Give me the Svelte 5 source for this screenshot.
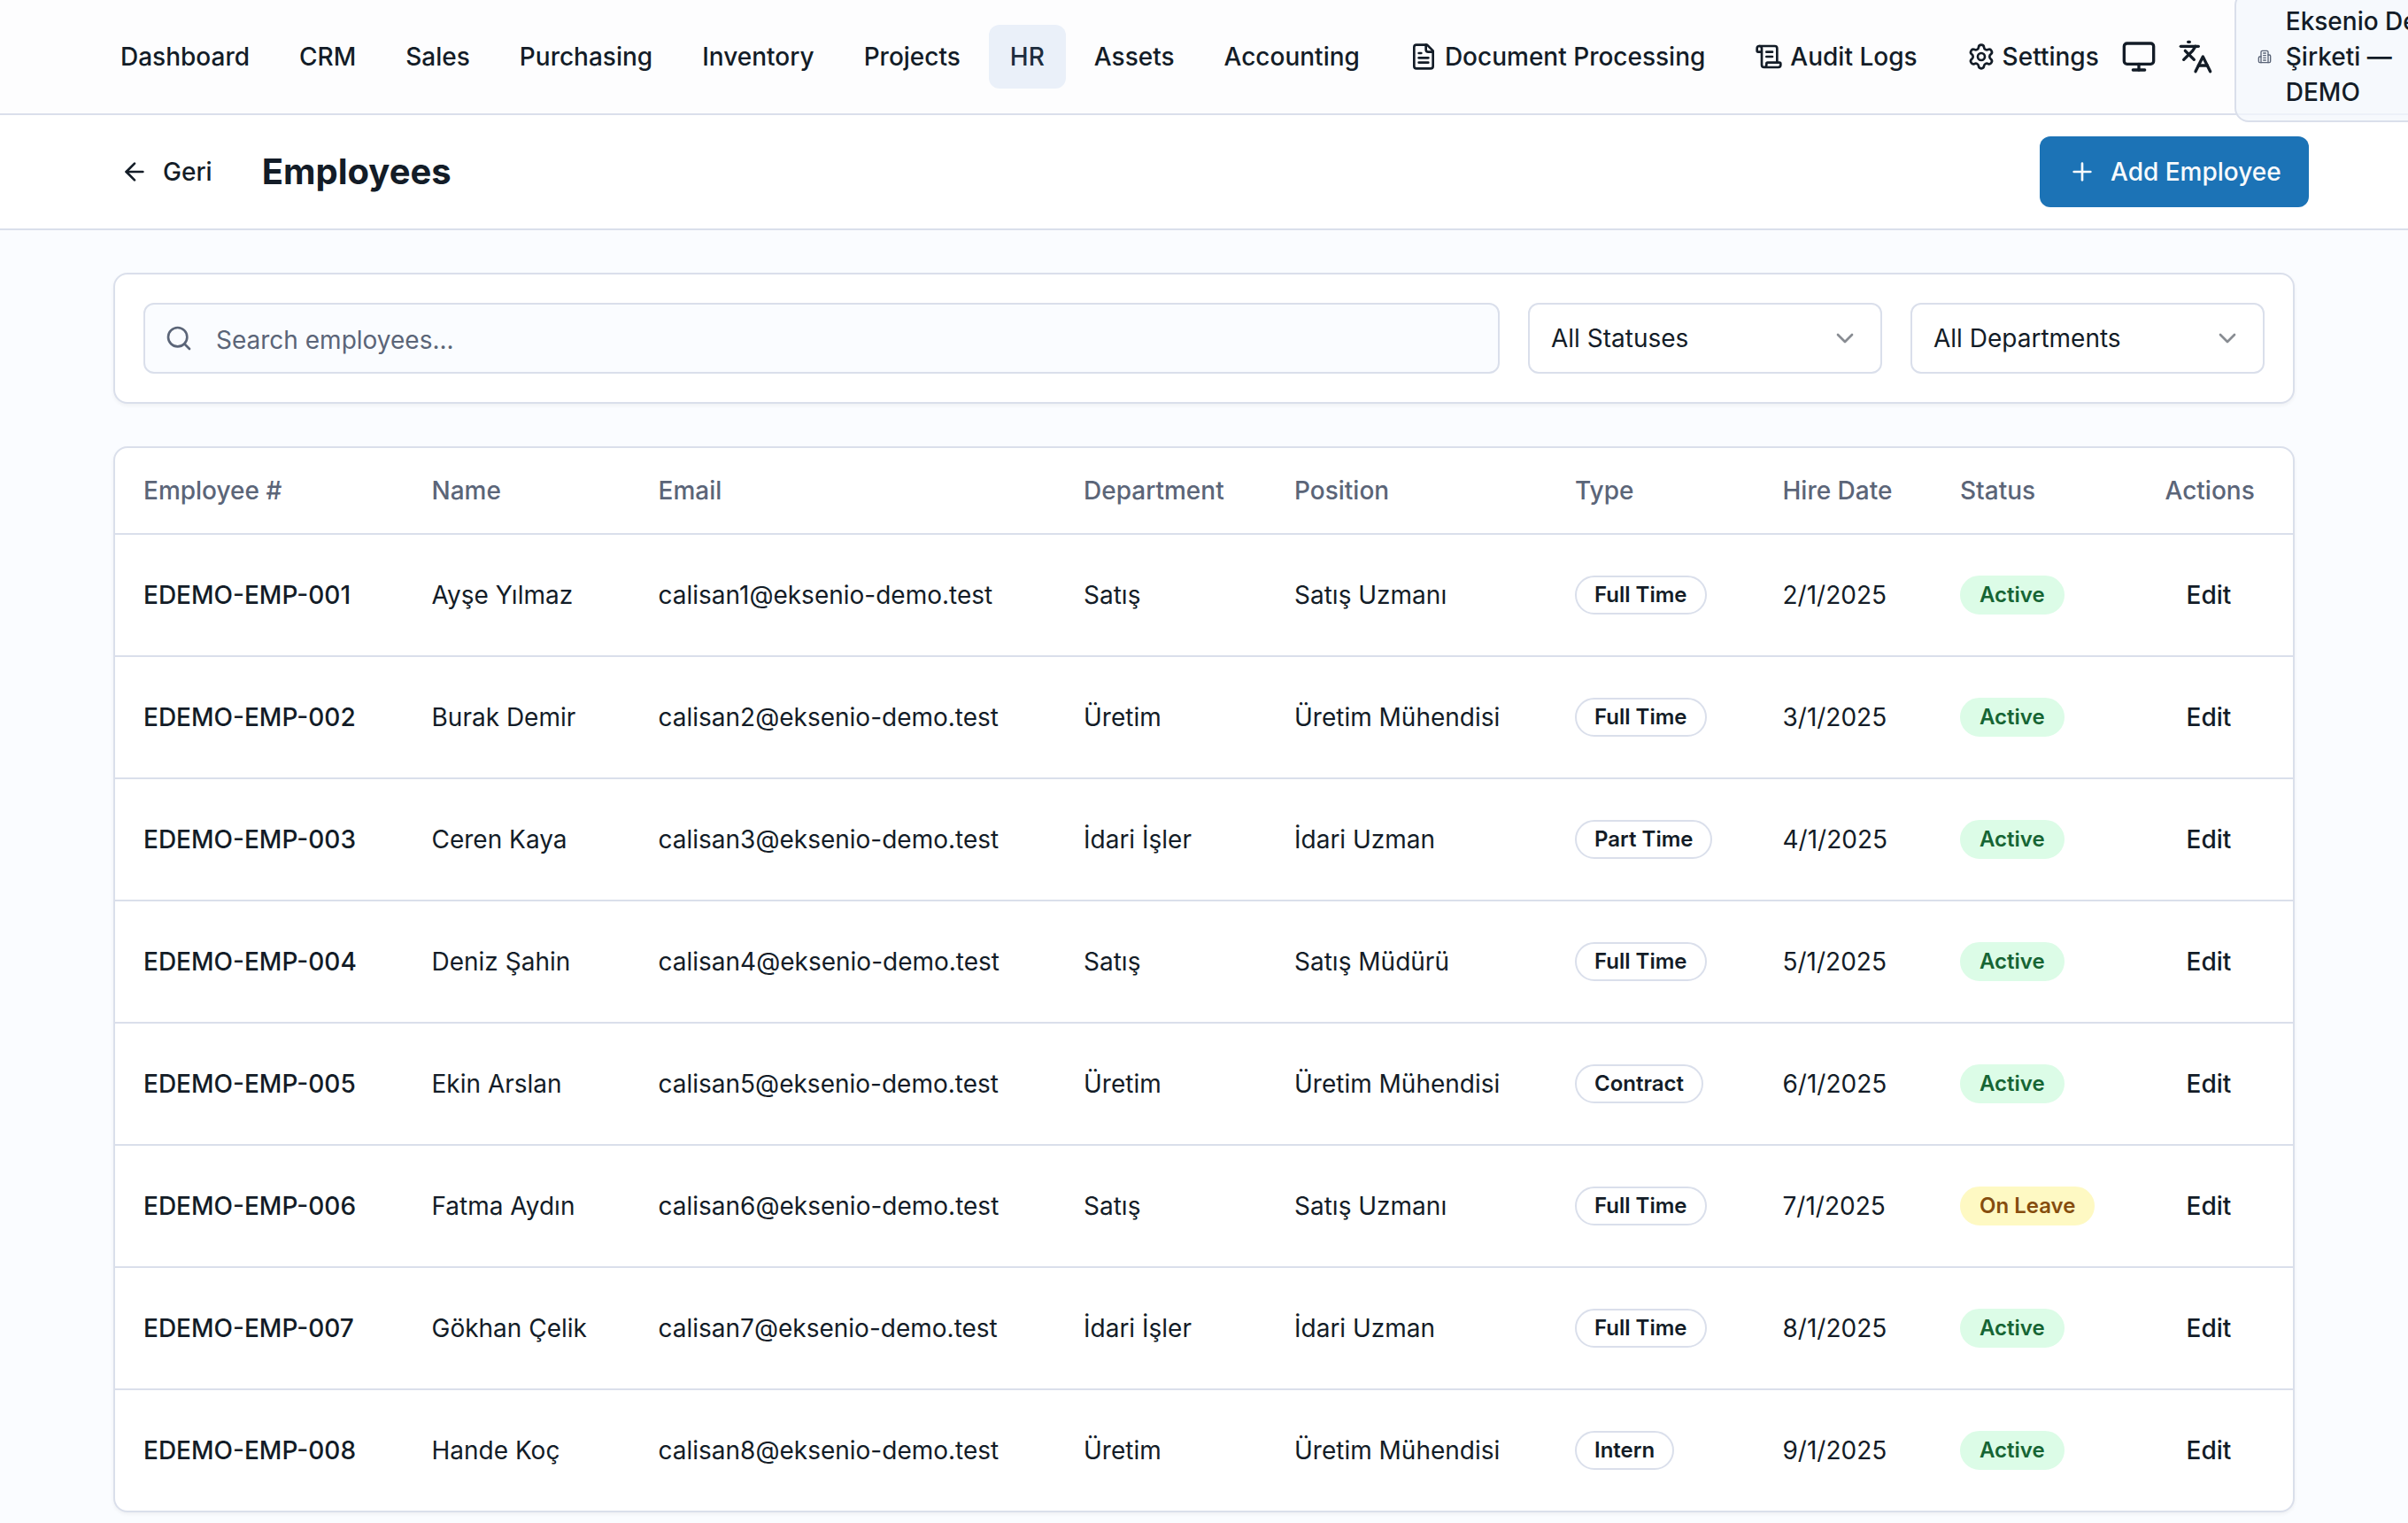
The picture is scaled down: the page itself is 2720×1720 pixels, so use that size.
<script>
  const links = ['Dashboard', 'CRM', 'Sales', 'Purchasing', 'Inventory', 'Projects', 'HR', 'Assets', 'Accounting'];

  const columns = ['Employee #', 'Name', 'Email', 'Department', 'Position', 'Type', 'Hire Date', 'Status', 'Actions'];

  const people = [
    ['Ayşe Yılmaz', 'Satış', 'Satış Uzmanı', 'Full Time', 'Active'],
    ['Burak Demir', 'Üretim', 'Üretim Mühendisi', 'Full Time', 'Active'],
    ['Ceren Kaya', 'İdari İşler', 'İdari Uzman', 'Part Time', 'Active'],
    ['Deniz Şahin', 'Satış', 'Satış Müdürü', 'Full Time', 'Active'],
    ['Ekin Arslan', 'Üretim', 'Üretim Mühendisi', 'Contract', 'Active'],
    ['Fatma Aydın', 'Satış', 'Satış Uzmanı', 'Full Time', 'On Leave'],
    ['Gökhan Çelik', 'İdari İşler', 'İdari Uzman', 'Full Time', 'Active'],
    ['Hande Koç', 'Üretim', 'Üretim Mühendisi', 'Intern', 'Active'],
  ];

  const employees = people.map(([name, department, position, type, status], i) => ({
    code: `EDEMO-EMP-00${i + 1}`,
    email: `calisan${i + 1}@eksenio-demo.test`,
    hired: `${i + 2}/1/2025`,
    name, department, position, type, status,
  }));

  const icons = {
    file: ['M15 2H6a2 2 0 0 0-2 2v16a2 2 0 0 0 2 2h12a2 2 0 0 0 2-2V7Z', 'M14 2v4a2 2 0 0 0 2 2h4', 'M10 9H8', 'M16 13H8', 'M16 17H8'],
    scroll: ['M15 12h-5', 'M15 8h-5', 'M19 17V5a2 2 0 0 0-2-2H4', 'M8 21h12a2 2 0 0 0 2-2v-1a1 1 0 0 0-1-1H11a1 1 0 0 0-1 1v1a2 2 0 1 1-4 0V5a2 2 0 1 0-4 0v2a1 1 0 0 0 1 1h3'],
    gear: ['M9.671 4.136a2.34 2.34 0 0 1 4.659 0 2.34 2.34 0 0 0 3.319 1.915 2.34 2.34 0 0 1 2.33 4.033 2.34 2.34 0 0 0 0 3.831 2.34 2.34 0 0 1-2.33 4.033 2.34 2.34 0 0 0-3.319 1.915 2.34 2.34 0 0 1-4.659 0 2.34 2.34 0 0 0-3.32-1.915 2.34 2.34 0 0 1-2.33-4.033 2.34 2.34 0 0 0 0-3.831A2.34 2.34 0 0 1 6.35 6.051a2.34 2.34 0 0 0 3.319-1.915', 'M15 12a3 3 0 1 1-6 0a3 3 0 1 1 6 0'],
    monitor: ['M4 3h16a2 2 0 0 1 2 2v10a2 2 0 0 1-2 2H4a2 2 0 0 1-2-2V5a2 2 0 0 1 2-2z', 'M8 21h8', 'M12 17v4'],
    languages: ['m5 8 6 6', 'm4 14 6-6 2-3', 'M2 5h12', 'M7 2h1', 'm22 22-5-10-5 10', 'M14 18h6'],
    building: ['M6 22V4a2 2 0 0 1 2-2h8a2 2 0 0 1 2 2v18Z', 'M6 12H4a2 2 0 0 0-2 2v6a2 2 0 0 0 2 2h2', 'M18 9h2a2 2 0 0 1 2 2v9a2 2 0 0 1-2 2h-2', 'M10 6h4', 'M10 10h4', 'M10 14h4', 'M10 18h4'],
    back: ['m12 19-7-7 7-7', 'M19 12H5'],
    plus: ['M5 12h14', 'M12 5v14'],
    search: ['M19 11a8 8 0 1 1-16 0a8 8 0 1 1 16 0', 'm21 21-4.3-4.3'],
    chevron: ['m6 9 6 6 6-6'],
  };
</script>

{#snippet icon(name)}
  <svg class="icon {name}" viewBox="0 0 24 24" aria-hidden="true">
    {#each icons[name] as d}<path {d} />{/each}
  </svg>
{/snippet}

<div class="page">
  <header class="topbar">
    <nav>
      {#each links as link}
        <a class="link" class:current={link === 'HR'}>{link}</a>
      {/each}
      <a class="link">{@render icon('file')}Document Processing</a>
      <a class="link">{@render icon('scroll')}Audit Logs</a>
      <a class="link settings">{@render icon('gear')}Settings</a>
    </nav>
    <div class="tools">
      {@render icon('monitor')}
      {@render icon('languages')}
    </div>
    <div class="company">
      {@render icon('building')}
      <span>Eksenio Demo<br />Şirketi —<br />DEMO</span>
    </div>
  </header>

  <section class="titlebar">
    <a class="back-link">{@render icon('back')}Geri</a>
    <h1>Employees</h1>
    <button class="add">{@render icon('plus')}Add Employee</button>
  </section>

  <main>
    <div class="card filters">
      <div class="search-box">{@render icon('search')}<span>Search employees...</span></div>
      <div class="select">All Statuses{@render icon('chevron')}</div>
      <div class="select">All Departments{@render icon('chevron')}</div>
    </div>

    <div class="card table">
      <div class="row head">
        {#each columns as column}<div>{column}</div>{/each}
      </div>
      {#each employees as e}
        <div class="row">
          <div class="code">{e.code}</div>
          <div>{e.name}</div>
          <div>{e.email}</div>
          <div>{e.department}</div>
          <div>{e.position}</div>
          <div><span class="badge outline">{e.type}</span></div>
          <div>{e.hired}</div>
          <div><span class="badge" class:active={e.status === 'Active'} class:leave={e.status === 'On Leave'}>{e.status}</span></div>
          <div><span class="edit">Edit</span></div>
        </div>
      {/each}
    </div>
  </main>
</div>

<style>
  :global(body) {
    margin: 0;
    overflow: hidden;
  }
  .page, .page * {
    box-sizing: border-box;
  }
  .page {
    width: 2720px;
    height: 1720px;
    overflow: hidden;
    background: #fafcff;
    color: #131c27;
    font: 400 28px/40px Inter, sans-serif;
    white-space: nowrap;
  }
  .icon {
    width: 32px;
    height: 32px;
    flex: none;
    fill: none;
    stroke: currentColor;
    stroke-width: 2;
    stroke-linecap: round;
    stroke-linejoin: round;
  }
  .topbar {
    position: relative;
    z-index: 1;
    display: flex;
    align-items: center;
    height: 130px;
    padding-left: 112px;
    border-bottom: 2px solid #dadfeb;
    background: #fdfdfe;
  }
  nav {
    display: flex;
    gap: 8px;
  }
  .link {
    display: flex;
    align-items: center;
    gap: 8px;
    height: 72px;
    padding: 0 24px;
    border-radius: 12px;
    font-weight: 500;
  }
  .current {
    background: #eaf0f9;
    color: #1d2d3e;
  }
  .tools {
    display: flex;
    gap: 24px;
    margin-left: 1px;
  }
  .tools .icon {
    width: 40px;
    height: 40px;
  }
  .company {
    display: flex;
    flex: none;
    align-items: center;
    gap: 16px;
    width: 280px;
    height: 148px;
    margin-left: 24px;
    padding: 0 24px;
    border: 2px solid #dadfeb;
    border-radius: 16px;
    background: rgba(243, 247, 252, 0.75);
    font-weight: 500;
  }
  .building {
    width: 16px;
    height: 16px;
    color: #5b6578;
  }
  .titlebar {
    display: flex;
    align-items: center;
    height: 130px;
    padding: 0 112px 0 136px;
    border-bottom: 2px solid #dadfeb;
    background: #fff;
  }
  .back-link {
    display: flex;
    align-items: center;
    gap: 16px;
    font-weight: 500;
  }
  h1 {
    margin: 0 0 0 56px;
    font-size: 40px;
    line-height: 56px;
    font-weight: 700;
  }
  .add {
    display: flex;
    align-items: center;
    gap: 16px;
    width: 304px;
    height: 80px;
    margin-left: auto;
    padding: 0 0 0 32px;
    border: 0;
    border-radius: 12px;
    background: #1c73b6;
    color: #f8fafc;
    font: inherit;
    font-weight: 500;
  }
  main {
    display: flex;
    flex-direction: column;
    gap: 48px;
    padding: 48px 128px 0;
  }
  .card {
    border: 2px solid #dadfeb;
    border-radius: 16px;
    background: #fff;
    box-shadow: 0 2px 4px rgba(0, 0, 0, 0.05);
  }
  .filters {
    display: flex;
    gap: 32px;
    padding: 32px;
  }
  .search-box, .select {
    display: flex;
    align-items: center;
    height: 80px;
    border: 2px solid #dadfeb;
    border-radius: 12px;
  }
  .search-box {
    flex: 1;
    gap: 26px;
    padding: 0 22px;
    background: #fafcff;
    color: #5b6578;
  }
  .search-box span {
    padding-top: 3px;
  }
  .select {
    justify-content: space-between;
    width: 400px;
    padding: 0 24px;
  }
  .chevron {
    opacity: 0.5;
  }
  .row {
    display: grid;
    grid-template-columns: 325.5px 256px 480.5px 238px 317px 234.5px 200.5px 231.5px 1fr;
    align-items: center;
    height: 138px;
    border-bottom: 2px solid #dadfeb;
  }
  .row > div {
    padding-left: 32px;
  }
  .row:last-child {
    height: 136px;
    border-bottom: 0;
  }
  .head {
    height: 98px;
    color: #5b6578;
    font-weight: 500;
  }
  .code, .edit {
    font-weight: 500;
  }
  .edit {
    padding-left: 24px;
  }
  .row > div:has(.badge) {
    display: flex;
  }
  .badge {
    height: 44px;
    padding: 4px 20px;
    border: 2px solid transparent;
    border-radius: 22px;
    font-size: 24px;
    line-height: 32px;
    font-weight: 600;
  }
  .outline {
    border-color: #dadfeb;
  }
  .active {
    background: #dcfce7;
    border-color: #dcfce7;
    color: #166534;
  }
  .leave {
    background: #fef9c3;
    border-color: #fef9c3;
    color: #854d0e;
  }
</style>
